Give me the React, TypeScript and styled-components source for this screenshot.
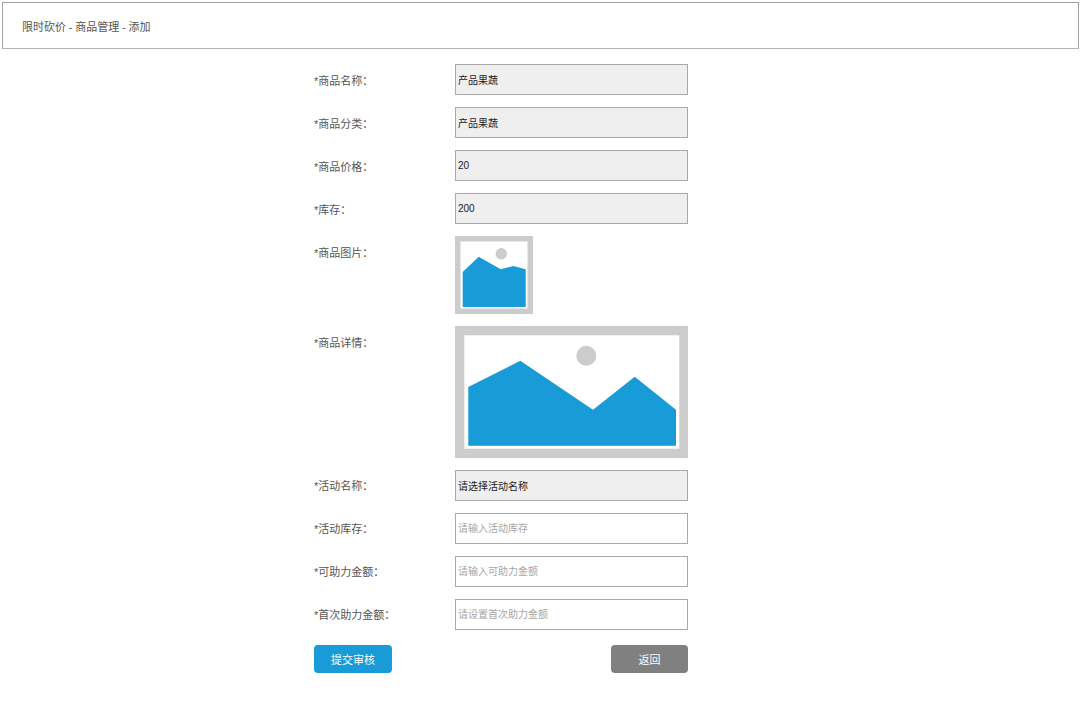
import * as React from 'react';
import styled, { createGlobalStyle } from 'styled-components';

const GlobalStyle = createGlobalStyle`
  html, body {
    margin: 0;
    padding: 0;
    background: #fff;
  }
  body, input, button {
    font-family: "Liberation Sans", "Noto Sans CJK SC", sans-serif;
    font-size: 11px;
  }
`;

const Page = styled.div`
  width: 1080px;
  height: 704px;
  padding-top: 2px;
  box-sizing: border-box;
  overflow: hidden;
`;

const Breadcrumb = styled.div`
  box-sizing: border-box;
  height: 47px;
  margin: 0 1px 0 2px;
  padding: 4px 0 0 19px;
  border: 1px solid #a0a0a0;
  border-bottom-color: #b4b4b4;
  display: flex;
  align-items: center;
  color: #555;
  line-height: 1;
  word-spacing: -0.25px;
`;

const Form = styled.form`
  width: 374px;
  margin: 15px 0 0 314px;
  display: flex;
  flex-direction: column;
  gap: 12px;
`;

const Row = styled.div<{ $top?: boolean }>`
  display: grid;
  grid-template-columns: 141px 233px;
  align-items: ${(p) => (p.$top ? 'start' : 'center')};
`;

const Label = styled.label<{ $top?: boolean; $low?: boolean }>`
  color: #555;
  line-height: 16px;
  padding-top: ${(p) => (p.$top ? '9px' : p.$low ? '3px' : '1px')};
`;

const Field = styled.input`
  box-sizing: border-box;
  display: block;
  width: 233px;
  height: 31px;
  margin: 0;
  padding: 0 2px;
  border: 1px solid #a8a8a8;
  border-radius: 0;
  outline: none;
  font-size: 10px;
  color: #222;
  background: ${(p) => (p.readOnly ? '#efefef' : '#fff')};

  &::placeholder {
    color: #a6a6a6;
    opacity: 1;
  }
`;

const Thumb = styled.svg`
  display: block;
  width: 78px;
  height: 78px;
`;

const Banner = styled.svg`
  display: block;
  width: 233px;
  height: 132px;
`;

const Actions = styled.div`
  display: flex;
  justify-content: space-between;
  margin-top: 3px;
`;

const Button = styled.button<{ $grey?: boolean }>`
  box-sizing: border-box;
  width: ${(p) => (p.$grey ? '77px' : '78px')};
  height: 28px;
  padding: 0;
  border: 0;
  border-radius: 4px;
  color: #fff;
  background: ${(p) => (p.$grey ? '#808080' : '#199bd7')};
`;

const ThumbImage = () => (
  <Thumb viewBox="0 0 78 78">
    <rect width="78" height="78" fill="#cccccc" />
    <rect x="5.5" y="5.5" width="67" height="67" fill="#fff" />
    <circle cx="46.3" cy="17.7" r="5.7" fill="#cccccc" />
    <path d="M7.7 36 23.7 20.7 45.7 33.3 58.3 30 70.7 33.3V71H7.7Z" fill="#189bd7" />
  </Thumb>
);

const BannerImage = () => (
  <Banner viewBox="0 0 233 132">
    <rect width="233" height="132" fill="#cccccc" />
    <rect x="9.3" y="9.3" width="215" height="113.4" fill="#fff" />
    <circle cx="131.3" cy="29.7" r="10" fill="#cccccc" />
    <path d="M13.3 61 65.3 34.7 138 83.7 179.7 50.7 221 83.7V119.7H13.3Z" fill="#189bd7" />
  </Banner>
);

const App = () => (
  <Page>
    <GlobalStyle />
    <Breadcrumb>限时砍价 - 商品管理 - 添加</Breadcrumb>
    <Form onSubmit={(e) => e.preventDefault()}>
      <Row>
        <Label $low>*商品名称：</Label>
        <Field readOnly value="产品果蔬" />
      </Row>
      <Row>
        <Label $low>*商品分类：</Label>
        <Field readOnly value="产品果蔬" />
      </Row>
      <Row>
        <Label $low>*商品价格：</Label>
        <Field readOnly value="20" />
      </Row>
      <Row>
        <Label $low>*库存：</Label>
        <Field readOnly value="200" />
      </Row>
      <Row $top>
        <Label $top>*商品图片：</Label>
        <ThumbImage />
      </Row>
      <Row $top>
        <Label $top>*商品详情：</Label>
        <BannerImage />
      </Row>
      <Row>
        <Label>*活动名称：</Label>
        <Field readOnly value="请选择活动名称" />
      </Row>
      <Row>
        <Label>*活动库存：</Label>
        <Field placeholder="请输入活动库存" />
      </Row>
      <Row>
        <Label>*可助力金额：</Label>
        <Field placeholder="请输入可助力金额" />
      </Row>
      <Row>
        <Label>*首次助力金额：</Label>
        <Field placeholder="请设置首次助力金额" />
      </Row>
      <Actions>
        <Button type="submit">提交审核</Button>
        <Button type="button" $grey>返回</Button>
      </Actions>
    </Form>
  </Page>
);

export default App;
